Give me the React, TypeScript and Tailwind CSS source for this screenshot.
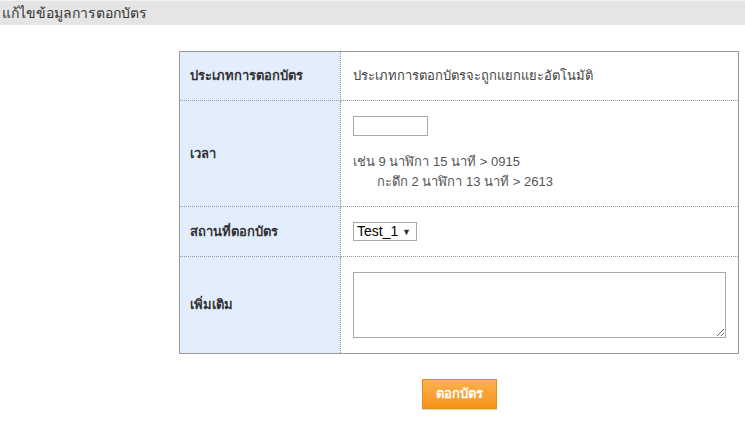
const FONT = "font-['Tahoma','Noto_Sans','Liberation_Sans',sans-serif]";

const App: React.FC = () => {
  return (
    <div className={`min-h-screen bg-white ${FONT}`}>
      <div className="h-[25px] bg-[#e5e5e5] border-t border-[#f3f3ea] pl-[2px] text-[14px] leading-[23px] text-[#333]">
        แก้ไขข้อมูลการตอกบัตร
      </div>

      <div className="ml-[179px] mt-[26px] w-[560px]">
        <table className="w-full border-collapse border border-[#999] text-[13px]">
          <tbody>
            <tr>
              <td className="w-[161px] bg-[#e3eefd] border-r border-b border-dotted border-[#999] pl-[10px] h-[49px] align-middle text-[#333] font-bold">
                ประเภทการตอกบัตร
              </td>
              <td className="border-b border-dotted border-[#999] pl-[12px] align-middle text-[#444]">
                ประเภทการตอกบัตรจะถูกแยกแยะอัตโนมัติ
              </td>
            </tr>
            <tr>
              <td className="bg-[#e3eefd] border-r border-b border-dotted border-[#999] pl-[10px] align-middle text-[#333] font-bold">
                เวลา
              </td>
              <td className="border-b border-dotted border-[#999] pl-[12px] pt-[15px] pb-[14px] text-[#555]">
                <input
                  type="text"
                  className="block w-[75px] h-[20px] border border-[#a9a9a9] bg-white outline-none px-1 text-[13px]"
                />
                <div className="mt-[16px] leading-[20px] font-['Liberation_Sans','Noto_Sans',sans-serif]">
                  <div>เช่น 9 นาฬิกา 15 นาที &gt; 0915</div>
                  <div className="pl-[24px]">กะดึก 2 นาฬิกา 13 นาที &gt; 2613</div>
                </div>
              </td>
            </tr>
            <tr>
              <td className="bg-[#e3eefd] border-r border-b border-dotted border-[#999] pl-[10px] h-[50px] align-middle text-[#333] font-bold">
                สถานที่ตอกบัตร
              </td>
              <td className="border-b border-dotted border-[#999] pl-[12px] align-middle">
                <div className="relative w-[64px] h-[19px]">
                  <select className="appearance-none w-full h-full border border-[#a9a9a9] bg-white pl-[3px] text-[14px] leading-[17px] text-black font-['Liberation_Sans',sans-serif] outline-none">
                    <option>Test_1</option>
                  </select>
                  <span className="pointer-events-none absolute right-[6px] top-[3px] text-[9px] text-[#333]">▼</span>
                </div>
              </td>
            </tr>
            <tr>
              <td className="bg-[#e3eefd] border-r border-dotted border-[#999] pl-[10px] align-middle text-[#333] font-bold">
                เพิ่มเติม
              </td>
              <td className="pl-[12px] pr-[12px] py-[15px]">
                <textarea className="block w-[373px] h-[66px] border border-[#a9a9a9] bg-white outline-none" />
              </td>
            </tr>
          </tbody>
        </table>

        <div className="flex justify-center mt-[25px]">
          <button
            type="button"
            className="w-[75px] h-[30px] border border-[#e0901f] bg-gradient-to-b from-[#fbb14f] to-[#f7930f] text-white text-[13px] font-bold shadow-[0_1px_1px_rgba(0,0,0,0.15)]"
          >
            ตอกบัตร
          </button>
        </div>
      </div>
    </div>
  );
};

export default App;
